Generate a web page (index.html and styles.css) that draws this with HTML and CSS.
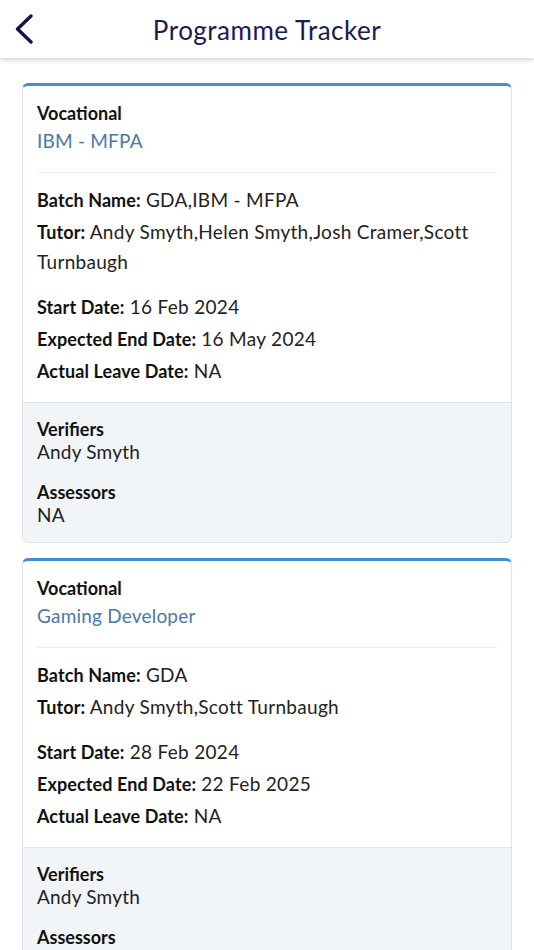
FILE: index.html
```html
<!DOCTYPE html>
<html lang="en">
<head>
<meta charset="utf-8">
<title>Programme Tracker</title>
<link rel="stylesheet" href="styles.css">
</head>
<body>
<header class="topbar">
  <button class="back" aria-label="Back">
    <svg width="20" height="30" viewBox="0 0 20 30"><path d="M17 2 L3.5 15 L17 28" fill="none" stroke="#14124a" stroke-width="3.4" stroke-linecap="round" stroke-linejoin="round"/></svg>
  </button>
  <h1 class="title">Programme Tracker</h1>
</header>
<main class="list">
  <section class="card">
    <div class="card-main">
      <div class="type">Vocational</div>
      <div class="prog">IBM - MFPA</div>
      <hr class="divider">
      <div class="group">
        <p class="row"><b>Batch Name:</b> GDA,IBM - MFPA</p>
        <p class="row"><b>Tutor:</b> Andy Smyth,Helen Smyth,Josh Cramer,Scott Turnbaugh</p>
      </div>
      <div class="group">
        <p class="row"><b>Start Date:</b> 16 Feb 2024</p>
        <p class="row"><b>Expected End Date:</b> 16 May 2024</p>
        <p class="row"><b>Actual Leave Date:</b> NA</p>
      </div>
    </div>
    <div class="card-foot">
      <div class="pair"><div class="k">Verifiers</div><div class="v">Andy Smyth</div></div>
      <div class="pair"><div class="k">Assessors</div><div class="v">NA</div></div>
    </div>
  </section>
  <section class="card">
    <div class="card-main">
      <div class="type">Vocational</div>
      <div class="prog">Gaming Developer</div>
      <hr class="divider">
      <div class="group">
        <p class="row"><b>Batch Name:</b> GDA</p>
        <p class="row"><b>Tutor:</b> Andy Smyth,Scott Turnbaugh</p>
      </div>
      <div class="group">
        <p class="row"><b>Start Date:</b> 28 Feb 2024</p>
        <p class="row"><b>Expected End Date:</b> 22 Feb 2025</p>
        <p class="row"><b>Actual Leave Date:</b> NA</p>
      </div>
    </div>
    <div class="card-foot">
      <div class="pair"><div class="k">Verifiers</div><div class="v">Andy Smyth</div></div>
      <div class="pair"><div class="k">Assessors</div><div class="v">NA</div></div>
    </div>
  </section>
</main>
</body>
</html>
```
FILE: styles.css
```css
* { box-sizing: border-box; }
html, body { margin: 0; padding: 0; background: #fff; }
body {
  font-family: Lato, "Noto Sans", "Liberation Sans", sans-serif;
  color: #1a1a1a;
  height: 950px;
  overflow: hidden;
}
.topbar {
  height: 58px;
  display: flex;
  align-items: center;
  justify-content: center;
  position: relative;
  background: #fff;
  box-shadow: 0 2px 5px rgba(0,0,0,0.18);
  z-index: 2;
}
.back {
  position: absolute;
  left: 14px;
  top: 14px;
  border: 0;
  background: none;
  padding: 0;
  width: 20px;
  height: 30px;
}
.back svg { display: block; }
.title {
  margin: 0;
  font-weight: 400;
  font-size: 26px;
  color: #1c1a4f;
  letter-spacing: 0.5px;
  padding-top: 2px;
}
.list {
  padding: 25px 22px 0;
  display: flex;
  flex-direction: column;
  gap: 15px;
}
.card {
  border: 1px solid #dfe2e6;
  border-top: 3px solid #3f8fd6;
  border-radius: 6px;
  overflow: hidden;
  background: #fff;
}
.card-main {
  padding: 13px 14px 16px;
}
.type {
  font-weight: 700;
  font-size: 18px;
  line-height: 28px;
  color: #111;
}
.prog {
  font-size: 19px;
  line-height: 28px;
  color: #4a7aa3;
  letter-spacing: 0.2px;
}
.divider {
  border: 0;
  border-top: 1px solid #eceef0;
  margin: 17px 0 12px;
}
.group { display: flex; flex-direction: column; gap: 2px; }
.group + .group { margin-top: 15px; }
.row {
  margin: 0;
  font-size: 19px;
  line-height: 30px;
  color: #222;
  letter-spacing: 0.3px;
}
.row b { font-weight: 700; color: #111; font-size: 18px; letter-spacing: 0.1px; }
.card-foot {
  background: #f2f5f8;
  border-top: 1px solid #e2e5e9;
  padding: 15px 14px 16px;
  display: flex;
  flex-direction: column;
  gap: 18px;
}
.k { font-weight: 700; font-size: 18px; line-height: 22px; color: #111; }
.v { font-size: 19px; line-height: 23px; color: #222; letter-spacing: 0.2px; }
```
